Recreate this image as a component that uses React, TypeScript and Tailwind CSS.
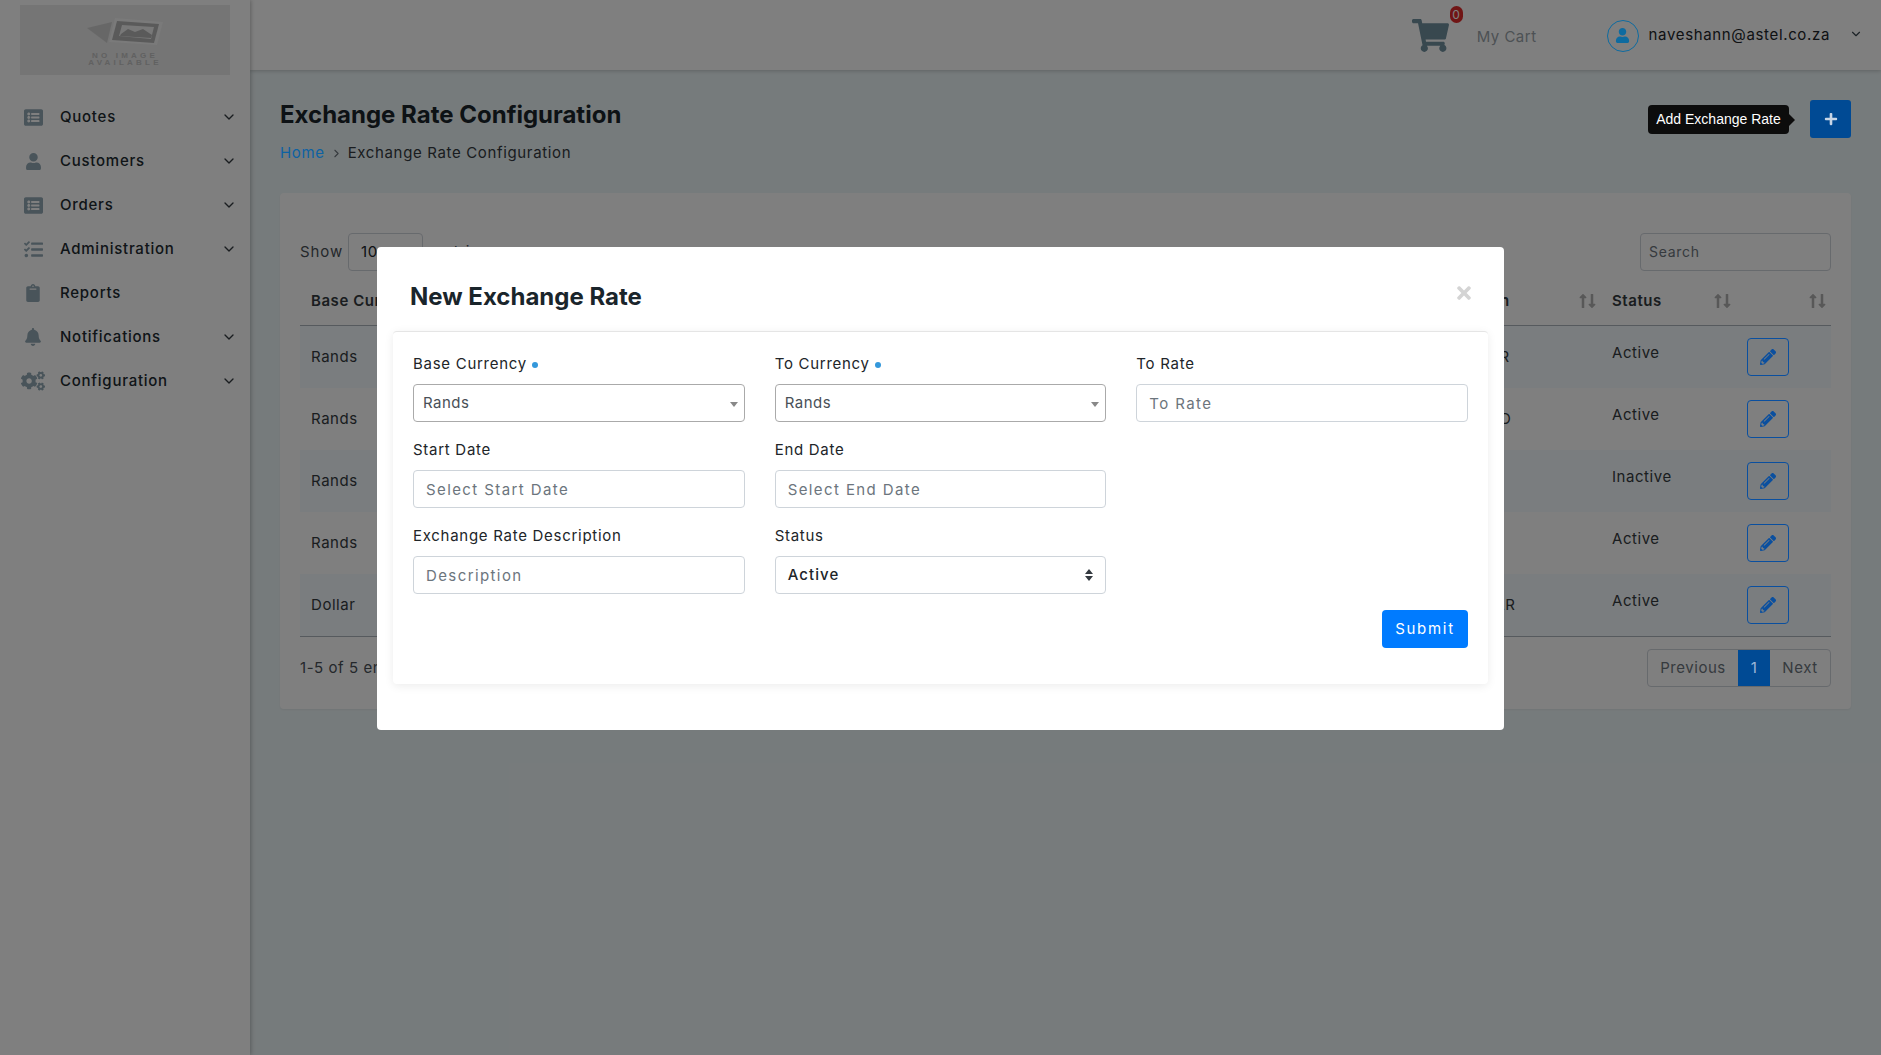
import React from "react";
import { FaListAlt, FaUser, FaTasks, FaClipboard, FaBell, FaCogs, FaShoppingCart, FaPencilAlt, FaPlus, FaLongArrowAltUp, FaLongArrowAltDown, FaTimes } from "react-icons/fa";
import { ChevronDown, ChevronRight } from "lucide-react";

const nav = [
  { label: "Quotes", icon: <FaListAlt size={19} />, chevron: true },
  { label: "Customers", icon: <FaUser size={17} />, chevron: true },
  { label: "Orders", icon: <FaListAlt size={19} />, chevron: true },
  { label: "Administration", icon: <FaTasks size={19} />, chevron: true },
  { label: "Reports", icon: <FaClipboard size={18} />, chevron: false },
  { label: "Notifications", icon: <FaBell size={18} />, chevron: true },
  { label: "Configuration", icon: <FaCogs size={24} />, chevron: true },
];

const rows = [
  ["Rands", "Rands to EUR", "Active"],
  ["Rands", "Rands to USD", "Active"],
  ["Rands", "Test", "Inactive"],
  ["Rands", "Rate", "Active"],
  ["Dollar", "Dollars to ZAR", "Active"],
];

const gridCols = "grid grid-cols-[300px_300px_250px_254px_198px_135px_94px]";

function Sort() {
  return (
    <span className="flex items-center text-[#b0b0b0]">
      <FaLongArrowAltUp size={16} className="-mr-[6.5px]" />
      <FaLongArrowAltDown size={16} />
    </span>
  );
}

function Head({ label, children, pad = "pl-[11px]" }: { label: string; children?: React.ReactNode; pad?: string }) {
  return (
    <div className={`flex items-center justify-between pr-[2px] pt-[6px] ${pad}`}>
      <span className="font-semibold text-[#343a40] whitespace-nowrap">{label}</span>
      {children}
    </div>
  );
}

function Label({ children, dot }: { children: React.ReactNode; dot?: boolean }) {
  return (
    <label className="flex items-center h-[24px] mb-[8px] text-[15px] text-[#212529] tracking-[0.72px]">
      {children}
      {dot && <span className="ml-[5px] mt-[2px] w-[6px] h-[6px] rounded-full bg-[#3498db]" />}
    </label>
  );
}

function Select2() {
  return (
    <div className="relative flex items-center h-[38px] rounded-[4px] border border-[#aaaaaa] bg-white pl-[9px] text-[15px] text-[#495057] tracking-[0.5px]">
      Rands
      <span className="absolute right-[6px] top-[17px] w-0 h-0 border-x-[4px] border-x-transparent border-t-[5px] border-t-[#888888]" />
    </div>
  );
}

function Input({ placeholder }: { placeholder: string }) {
  return (
    <input
      placeholder={placeholder}
      className="block w-full h-[38px] rounded-[4px] border border-[#ced4da] bg-white px-3 text-[15px] tracking-[1.4px] outline-none placeholder:text-[#6c757d] placeholder:opacity-100"
    />
  );
}

export default function App() {
  return (
    <div className="relative flex h-[1055px] w-[1881px] overflow-hidden bg-[#edf6f8] font-['Inter','Noto_Sans',sans-serif] text-[15px] text-[#212529] tracking-[0.55px]">
      <aside className="w-[250px] shrink-0 bg-white shadow-[1px_0_4px_rgba(0,0,0,0.25)] z-10">
        <div className="mx-[20px] mt-[5px] h-[70px] bg-[#eaeaea] flex flex-col items-center pt-[13px]">
          <svg width="76" height="28" viewBox="0 0 76 28">
            <path d="M0 10 L25 4 L20 25 Z" fill="#cfcfcf" />
            <path d="M28 0 L76 4 L70 27 L22 24 Z" fill="#f4f4f4" />
            <path d="M30 3 L72 6 L67 25 L25 22 Z" fill="#b4b4b4" />
            <path d="M35 7 L67 9 L64 21 L32 18 Z" fill="#f0f0f0" />
            <path d="M34 16 L41 11 L48 14 L56 11 L65 17 L64 20 L33 18 Z" fill="#b4b4b4" />
          </svg>
          <span className="block text-[#c2c2c2] text-[8px] leading-[7px] tracking-[3.2px] font-['Liberation_Sans',sans-serif] font-bold text-center mt-[6px] uppercase whitespace-nowrap">
            No image<br />available
          </span>
        </div>
        <nav className="mt-[20px] pl-[20px] pr-[13px]">
          {nav.map((n) => (
            <div key={n.label} className="flex items-center h-[44px] font-medium text-[#212a30] tracking-[0.75px]">
              <span className="w-[24px] flex justify-center text-[#92a8b4] ml-[1px]">{n.icon}</span>
              <span className="ml-[15px] flex-1">{n.label}</span>
              {n.chevron && <ChevronDown size={16} strokeWidth={2} className="text-[#343a40]" />}
            </div>
          ))}
        </nav>
      </aside>

      <div className="flex-1 flex flex-col min-w-0">
        <header className="h-[70px] shrink-0 bg-white shadow-[0_1px_4px_rgba(0,0,0,0.2)] flex items-center justify-end pr-[18px] pt-[1px]">
          <div className="relative text-[#70909f]">
            <FaShoppingCart size={37} />
            <span className="absolute -top-[11px] left-[38px] w-[13px] h-[17px] rounded-full bg-[#e02a2a] text-white text-[12px] leading-[17px] text-center tracking-normal">0</span>
          </div>
          <span className="ml-[28px] mt-[3px] text-[#9aa3a9] tracking-[0.5px]">My Cart</span>
          <span className="relative z-30 ml-[70px] w-[32px] h-[32px] rounded-full border border-[#0e6ba0] flex items-center justify-center text-[#0e6ba0]">
            <FaUser size={15} />
          </span>
          <span className="ml-[10px] text-[#212529] tracking-[0.65px]">naveshann@astel.co.za</span>
          <ChevronDown size={14} className="ml-[19px] -mt-[3px] text-[#39474f]" />
        </header>

        <main className="flex-1 pl-[30px] pr-[30px]">
          <div className="flex items-start justify-between pt-[30px] h-[123px]">
            <div>
              <h1 className="text-[24px] leading-[28px] mt-[1px] font-bold text-[#1a252b] tracking-normal">Exchange Rate Configuration</h1>
              <div className="mt-[13px] flex items-center tracking-[0.65px]">
                <span className="relative z-30 text-[#0d62a3] -mt-[1px]">Home</span>
                <ChevronRight size={13} className="mx-[5px] text-[#6c757d]" />
                <span className="text-[#343a40]">Exchange Rate Configuration</span>
              </div>
            </div>
            <button className="relative z-30 w-[41px] h-[38px] rounded-[3px] bg-[#004a94] text-[#c8d6e6] flex items-center justify-center">
              <FaPlus size={14} />
            </button>
          </div>

          <section className="h-[516px] rounded-[4px] bg-white px-[20px] pt-[40px] shadow-[0_1px_2px_rgba(0,0,0,0.05)]">
            <div className="flex items-center justify-between h-[38px]">
              <div className="flex items-center text-[#495057]">
                <span className="tracking-[0.9px]">Show</span>
                <span className="ml-[5px] w-[75px] h-[38px] rounded-[4px] border border-[#ced4da] flex items-center pl-[12px] text-[#212529]">10</span>
                <span className="ml-[12px]">entries</span>
              </div>
              <input placeholder="Search" className="w-[191px] h-[38px] rounded-[4px] border border-[#ced4da] px-2 pb-[1px] text-[14px] tracking-[0.7px] outline-none placeholder:text-[#6c757d] placeholder:opacity-100" />
            </div>
            <div className={`${gridCols} h-[55px] border-b border-[#adb5bd]`}>
              <Head label="Base Currency"><Sort /></Head>
              <Head label="To Currency"><Sort /></Head>
              <Head label="To Rate"><Sort /></Head>
              <Head label=""><Sort /></Head>
              <Head label="Description" pad="pl-[16px]"><Sort /></Head>
              <Head label="Status" pad="pl-[10px]"><Sort /></Head>
              <div className="flex items-center justify-end pr-[1px] pt-[6px]"><Sort /></div>
            </div>
            {rows.map((r, i) => (
              <div key={i} className={`${gridCols} h-[62px] items-center ${i % 2 === 0 ? "bg-[#f4fbff]" : "bg-white"}`}>
                <div className="pl-[11px] text-[#343a40]">{r[0]}</div>
                <div />
                <div />
                <div />
                <div className="text-[#343a40] whitespace-nowrap pl-[3px]">{r[1]}</div>
                <div className="pl-[10px] pb-2 text-[#343a40]">{r[2]}</div>
                <div className="pl-[10px]">
                  <button className="relative z-30 w-[42px] h-[38px] rounded-[4px] border border-[#0a4f9f] text-[#0a4f9f] flex items-center justify-center">
                    <FaPencilAlt size={16} />
                  </button>
                </div>
              </div>
            ))}
            <div className="border-t border-[#adb5bd] flex items-center justify-between pt-[12px]">
              <span className="text-[#495057] mt-[1px]">1-5 of 5 entries</span>
              <div className="flex h-[38px] rounded-[4px] border border-[#ced4da] items-stretch">
                <span className="w-[90px] flex items-center justify-center text-[#6c757d]">Previous</span>
                <span className="relative z-30 w-[32px] flex items-center justify-center bg-[#004a94] text-[#9db8d8]">1</span>
                <span className="w-[60px] flex items-center justify-center text-[#6c757d]">Next</span>
              </div>
            </div>
          </section>
        </main>
      </div>

      {/* modal backdrop */}
      <div className="absolute inset-0 z-20 bg-black/50" />

      {/* tooltip */}
      <div className="absolute z-30 left-[1648px] top-[105px] h-[29px] w-[141px] rounded-[4px] bg-[#0c0c0c] text-white flex items-center justify-center text-[14px] tracking-normal font-['Liberation_Sans',sans-serif]">
        Add Exchange Rate
        <span className="absolute -right-[6px] top-[9px] w-0 h-0 border-y-[6px] border-y-transparent border-l-[6px] border-l-[#0c0c0c]" />
      </div>

      {/* modal */}
      <div className="absolute z-30 left-[377px] top-[247px] w-[1127px] h-[483px] rounded-[4px] bg-white px-[16px]">
        <div className="relative h-[84px] flex items-center pt-[16px] pl-[17px]">
          <h2 className="text-[24px] font-bold text-[#1a252b] tracking-normal">New Exchange Rate</h2>
          <span className="absolute right-[14px] top-[36px] text-[#d4d4d4]"><FaTimes size={20} /></span>
        </div>
        <div className="h-[353px] rounded-[4px] border-t border-[#e5e5e5] bg-white px-[20px] pt-[20px] shadow-[0_2px_10px_rgba(0,0,0,0.08)]">
          <div className="grid grid-cols-3 gap-x-[30px] gap-y-[16px]">
            <div><Label dot>Base Currency</Label><Select2 /></div>
            <div><Label dot>To Currency</Label><Select2 /></div>
            <div><Label>To Rate</Label><Input placeholder="To Rate" /></div>
            <div><Label>Start Date</Label><Input placeholder="Select Start Date" /></div>
            <div><Label>End Date</Label><Input placeholder="Select End Date" /></div>
            <div />
            <div><Label>Exchange Rate Description</Label><Input placeholder="Description" /></div>
            <div>
              <Label>Status</Label>
              <div className="relative flex items-center h-[38px] rounded-[4px] border border-[#ced4da] bg-white pl-3 text-[15px] font-medium text-[#212529] tracking-[1.1px]">
                Active
                <svg width="8" height="12" viewBox="0 0 8 12" className="absolute right-[12px] top-[12px]">
                  <path d="M4 0 L8 5 L0 5 Z M0 7 L8 7 L4 12 Z" fill="#343a40" />
                </svg>
              </div>
            </div>
            <div />
          </div>
          <div className="flex justify-end mt-[16px]">
            <button className="w-[86px] h-[38px] rounded-[4px] bg-[#007bff] text-white text-[15px] tracking-[1.7px]">Submit</button>
          </div>
        </div>
      </div>
    </div>
  );
}
